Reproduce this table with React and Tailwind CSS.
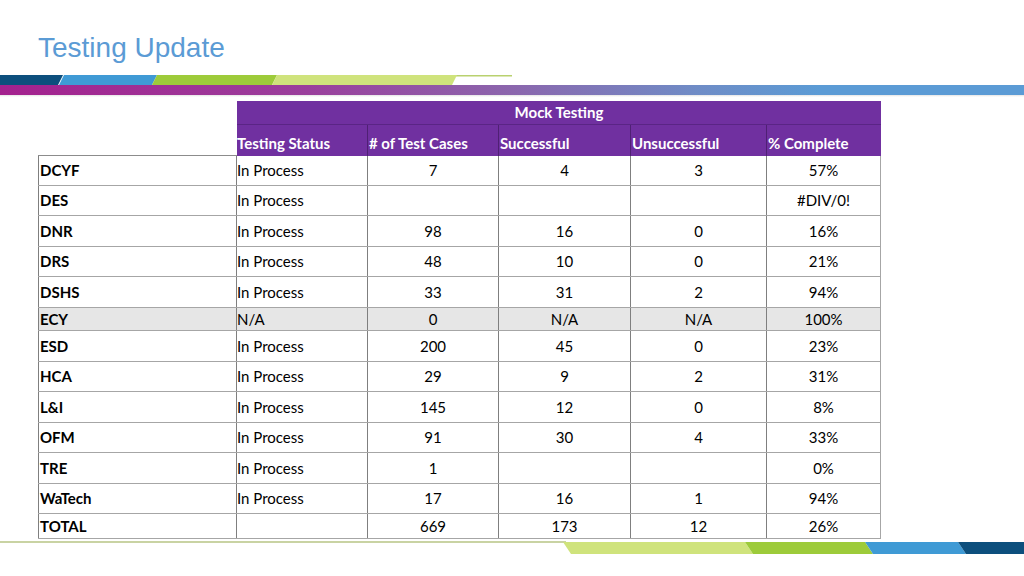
import React from "react";

const rows = [
  { name: "DCYF", status: "In Process", cases: "7", ok: "4", bad: "3", pct: "57%", h: "h-[30px]" },
  { name: "DES", status: "In Process", cases: "", ok: "", bad: "", pct: "#DIV/0!", h: "h-[30px]" },
  { name: "DNR", status: "In Process", cases: "98", ok: "16", bad: "0", pct: "16%", h: "h-[31px]" },
  { name: "DRS", status: "In Process", cases: "48", ok: "10", bad: "0", pct: "21%", h: "h-[30px]" },
  { name: "DSHS", status: "In Process", cases: "33", ok: "31", bad: "2", pct: "94%", h: "h-[31px]" },
  { name: "ECY", status: "N/A", cases: "0", ok: "N/A", bad: "N/A", pct: "100%", h: "h-[23px]", gray: true },
  { name: "ESD", status: "In Process", cases: "200", ok: "45", bad: "0", pct: "23%", h: "h-[31px]" },
  { name: "HCA", status: "In Process", cases: "29", ok: "9", bad: "2", pct: "31%", h: "h-[30px]" },
  { name: "L&I", status: "In Process", cases: "145", ok: "12", bad: "0", pct: "8%", h: "h-[31px]" },
  { name: "OFM", status: "In Process", cases: "91", ok: "30", bad: "4", pct: "33%", h: "h-[30px]" },
  { name: "TRE", status: "In Process", cases: "1", ok: "", bad: "", pct: "0%", h: "h-[31px]" },
  { name: "WaTech", status: "In Process", cases: "17", ok: "16", bad: "1", pct: "94%", h: "h-[30px]" },
  { name: "TOTAL", status: "", cases: "669", ok: "173", bad: "12", pct: "26%", h: "h-[25px]" },
];

function TopBar() {
  return (
    <svg width="1024" height="22" viewBox="0 0 1024 22" className="block">
      <defs>
        <linearGradient id="band" x1="0" x2="1" y1="0" y2="0">
          <stop offset="0" stopColor="#a4218e" />
          <stop offset="0.3" stopColor="#9a3f9c" />
          <stop offset="0.5" stopColor="#8b66ad" />
          <stop offset="0.68" stopColor="#6f8cc6" />
          <stop offset="0.8" stopColor="#5b9bd5" />
          <stop offset="1" stopColor="#5b9bd5" />
        </linearGradient>
        <linearGradient id="shade" x1="0" x2="0" y1="0" y2="1">
          <stop offset="0" stopColor="#e4e4e4" />
          <stop offset="1" stopColor="#ffffff" />
        </linearGradient>
      </defs>
      <rect x="455" y="0" width="57" height="1.5" fill="#b9d16f" />
      <polygon points="0,0 63,0 58,10 0,10" fill="#0d4f7d" />
      <polygon points="64,0 157,0 152,10 59,10" fill="#3f9ad5" />
      <polygon points="157,0 277,0 272,10 152,10" fill="#9dcb3a" />
      <polygon points="277,0 457,0 452,10 272,10" fill="#cfe37c" />
      <rect x="0" y="10" width="1024" height="10" fill="url(#band)" />
      <rect x="0" y="20" width="1024" height="2" fill="url(#shade)" />
    </svg>
  );
}

function BottomBar() {
  return (
    <svg width="1024" height="13" viewBox="0 0 1024 13" className="block">
      <rect x="0" y="0" width="566" height="2" fill="#c9d3a3" />
      <polygon points="563,1 745,1 753,13 571,13" fill="#cfe37c" />
      <polygon points="745,1 865,1 873,13 753,13" fill="#9dcb3a" />
      <polygon points="865,1 958,1 966,13 873,13" fill="#3f9ad5" />
      <polygon points="958,1 1024,1 1024,13 966,13" fill="#0d4f7d" />
    </svg>
  );
}

export default function App() {
  const cell = "flex items-center border-r border-r-[#7f7f7f]";
  return (
    <div
      className="w-[1024px] h-[576px] overflow-hidden bg-white text-black"
      style={{ fontFamily: "Lato, 'Liberation Sans', sans-serif" }}
    >
      <h1
        className="pl-[38px] pt-[32px] h-[64px] text-[28px] leading-[32px] text-[#5b9bd5]"
        style={{ fontFamily: "'Liberation Sans', Arial, sans-serif" }}
      >
        Testing Update
      </h1>
      <div className="mt-[11px]">
        <TopBar />
      </div>

      <div className="mt-[4px] ml-[38px] w-[843px] flex flex-col text-[15px] leading-none">
        {/* header */}
        <div className="flex h-[24px]">
          <div className="w-[199px]" />
          <div className="w-[644px] flex items-center justify-center bg-[#7030a0] border-b border-b-[#5a2585] font-bold text-white">
            Mock Testing
          </div>
        </div>
        <div className="flex h-[31px] font-bold text-white">
          <div className="w-[199px] border-b border-b-[#8c8c8c]" />
          <div className="w-[131px] flex items-end pb-[5px] bg-[#7030a0] border-r border-r-[#4f2074]">Testing Status</div>
          <div className="w-[131px] flex items-end pb-[5px] pl-[1px] bg-[#7030a0] border-r border-r-[#4f2074]">
            # of Test Cases
          </div>
          <div className="w-[132px] flex items-end pb-[5px] pl-[1px] bg-[#7030a0] border-r border-r-[#4f2074]">Successful</div>
          <div className="w-[136px] flex items-end pb-[5px] pl-[1px] bg-[#7030a0] border-r border-r-[#4f2074]">Unsuccessful</div>
          <div className="w-[114px] flex items-end pb-[5px] pl-[1px] bg-[#7030a0]">% Complete</div>
        </div>

        {/* body */}
        {rows.map((r) => (
          <div
            key={r.name}
            className={`flex ${r.h} border-b border-b-[#a6a6a6] ${r.gray ? "bg-[#e6e6e6]" : "bg-white"}`}
          >
            <div className={`w-[199px] pl-[1px] font-bold border-l border-l-[#7f7f7f] ${cell}`}>{r.name}</div>
            <div className={`w-[131px] ${cell}`}>{r.status}</div>
            <div className={`w-[131px] justify-center ${cell}`}>{r.cases}</div>
            <div className={`w-[132px] justify-center ${cell}`}>{r.ok}</div>
            <div className={`w-[136px] justify-center ${cell}`}>{r.bad}</div>
            <div className={`w-[114px] justify-center ${cell} border-r-[#a6a6a6]`}>{r.pct}</div>
          </div>
        ))}
      </div>

      <div className="mt-[2px]">
        <BottomBar />
      </div>
    </div>
  );
}
